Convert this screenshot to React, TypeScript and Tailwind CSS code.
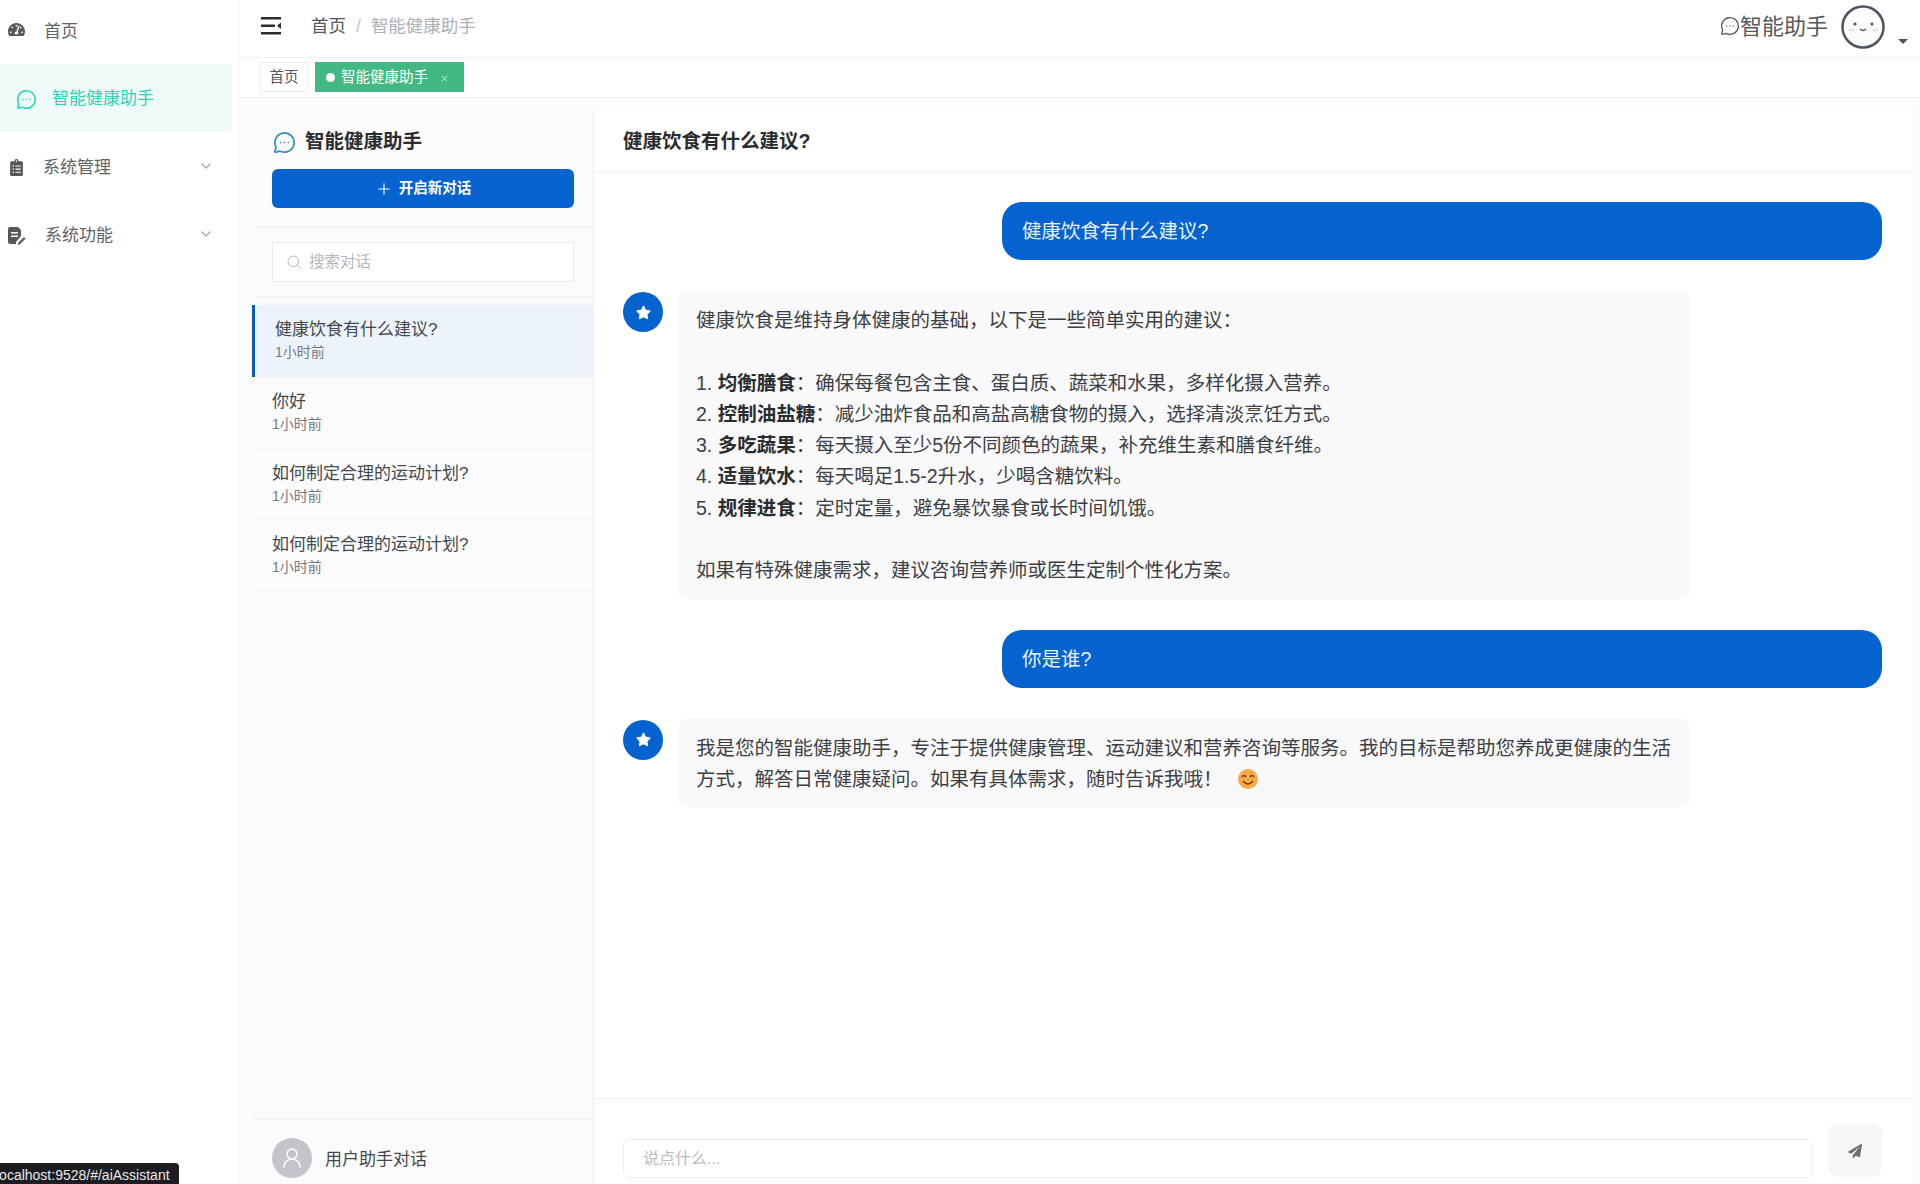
import { ChevronDown, MessageCircleMore, Plus, Search, UserRound, X } from "lucide-react";
import { FaClipboardList, FaPaperPlane, FaStar, FaTachometerAlt } from "react-icons/fa";

const font = { fontFamily: '"Liberation Sans", "Noto Sans CJK SC", sans-serif' };

const chats = [
  { title: "健康饮食有什么建议?", active: true },
  { title: "你好" },
  { title: "如何制定合理的运动计划?" },
  { title: "如何制定合理的运动计划?" },
];

const tips = [
  ["1. ", "均衡膳食", "：确保每餐包含主食、蛋白质、蔬菜和水果，多样化摄入营养。"],
  ["2. ", "控制油盐糖", "：减少油炸食品和高盐高糖食物的摄入，选择清淡烹饪方式。"],
  ["3. ", "多吃蔬果", "：每天摄入至少5份不同颜色的蔬果，补充维生素和膳食纤维。"],
  ["4. ", "适量饮水", "：每天喝足1.5-2升水，少喝含糖饮料。"],
  ["5. ", "规律进食", "：定时定量，避免暴饮暴食或长时间饥饿。"],
];

function DocIcon() {
  return (
    <svg width="18" height="18" viewBox="0 0 18 18" className="text-[#55585c]">
      <path d="M2 0h8l3 3v6l-5 6v2H2a2 2 0 0 1-2-2V2a2 2 0 0 1 2-2z" fill="currentColor" />
      <path d="M3 5h7v1.6H3zM3 8.5h7v1.6H3z" fill="#fff" />
      <path d="M10 16l6-6 1.6 1.6-6 6H10z" fill="currentColor" />
    </svg>
  );
}

function Sidebar() {
  return (
    <aside className="w-[240px] shrink-0 border-r border-[#eef7f5] bg-white text-[17px] text-[#5f6266]">
      <div className="flex h-[60px] items-center pl-[8px] pt-[3px]">
        <FaTachometerAlt className="-mt-[4px] text-[17px] text-[#55585c]" />
        <span className="ml-[19px]">首页</span>
      </div>
      <div className="mt-[4px] flex h-[68px] w-[232px] items-center bg-[#effbf9] pl-[16px] pt-[2px] text-[#2fd3b8]">
        <MessageCircleMore size={21} strokeWidth={1.8} />
        <span className="ml-[15px]">智能健康助手</span>
      </div>
      <div className="flex h-[68px] items-center pl-[8px] pr-[25px] pt-[3px]">
        <FaClipboardList className="text-[17px] text-[#55585c]" />
        <span className="ml-[18px] flex-1">系统管理</span>
        <ChevronDown size={16} className="-mt-[4px] text-[#a5a8ad]" />
      </div>
      <div className="flex h-[68px] items-center pl-[8px] pr-[25px] pt-[3px]">
        <DocIcon />
        <span className="ml-[19px] flex-1">系统功能</span>
        <ChevronDown size={16} className="-mt-[4px] text-[#a5a8ad]" />
      </div>
    </aside>
  );
}

function Topbar() {
  return (
    <header className="flex h-[58px] shrink-0 items-center border-b border-[#f0f1f3] bg-white pl-[21px] pr-[12px]">
      <svg width="20" height="18" viewBox="0 0 20 18" className="-mt-[6px] text-[#2a2d30]">
        <path d="M0 0h20v2.5H0zM0 7.5h14V10H0zM0 15h20v2.5H0z" fill="currentColor" />
        <path d="M20 5.5v6.500l-4-3.200z" fill="currentColor" />
      </svg>
      <div className="-mt-[4px] ml-[30px] flex items-center text-[17.5px]">
        <span className="text-[#55585c]">首页</span>
        <span className="mx-[10px] text-[#c0c4cc]">/</span>
        <span className="text-[#aeb1b6]">智能健康助手</span>
      </div>
      <div className="flex-1" />
      <MessageCircleMore size={20} strokeWidth={1.6} className="-mt-[5px] text-[#55585c]" />
      <span className="-mt-[5px] text-[22px] text-[#55585c]">智能助手</span>
      <svg width="44" height="46" viewBox="0 0 44 46" className="ml-[13px] -mt-[3px]">
        <circle cx="22" cy="23" r="20.5" fill="#fbfcfc" stroke="#4c5560" strokeWidth="2.5" />
        <circle cx="14" cy="20" r="1.6" fill="#4c5560" />
        <circle cx="31" cy="20" r="1.6" fill="#4c5560" />
        <path d="M19 25q3 3 6 0" fill="none" stroke="#4c5560" strokeWidth="1.3" />
        <ellipse cx="11" cy="26" rx="3" ry="1.5" fill="#f3dede" />
        <ellipse cx="34" cy="26" rx="3" ry="1.5" fill="#f3dede" />
      </svg>
      <span className="ml-[13px] mt-[26px] h-0 w-0 border-x-[5px] border-t-[5px] border-x-transparent border-t-[#4c5560]" />
    </header>
  );
}

function Tags() {
  return (
    <div className="flex h-[40px] shrink-0 items-start gap-[7px] border-b border-[#eceef0] bg-white pl-[20px] pt-[4px] text-[14.5px]">
      <span className="flex h-[30px] w-[48px] items-center justify-center border border-[#eeeff1] pt-[1px] text-[#55585c]">首页</span>
      <span className="flex h-[30px] w-[149px] items-center bg-[#42b983] pl-[11px] pt-[1px] text-white">
        <span className="h-[9px] w-[9px] rounded-full bg-white" />
        <span className="ml-[6px]">智能健康助手</span>
        <X size={9} strokeWidth={2.5} className="ml-[12px] mt-[2px] text-[#d6f3e5]" />
      </span>
    </div>
  );
}

function ChatList() {
  return (
    <section className="flex w-[342px] shrink-0 flex-col border-r border-[#eeeff1] bg-[#fbfbfc]">
      <div className="h-[116px] shrink-0 border-b border-[#f0f1f3] px-[20px] pt-[20px]">
        <div className="flex h-[22px] items-center">
          <MessageCircleMore size={23} strokeWidth={1.8} className="ml-[1px] text-[#2a8fc4]" />
          <h2 className="ml-[9px] text-[19.5px] font-bold text-[#2a2d30]">智能健康助手</h2>
        </div>
        <button className="mt-[16px] flex h-[39px] w-[302px] items-center justify-center gap-[6px] rounded-[6px] bg-[#0563d0] text-[14.5px] font-bold text-white">
          <Plus size={18} strokeWidth={1.5} />
          开启新对话
        </button>
      </div>
      <div className="h-[70px] shrink-0 border-b border-[#f0f1f3] px-[20px] pt-[15px]">
        <div className="flex h-[40px] w-[302px] items-center border border-[#e8eaed] bg-white pl-[13px] text-[15.5px] text-[#b4b7bc]">
          <Search size={16} strokeWidth={1.5} />
          <span className="ml-[7px]">搜索对话</span>
        </div>
      </div>
      <ul className="mt-[8px] flex-1">
        {chats.map((chat, i) => (
          <li
            key={i}
            className={
              chat.active
                ? "h-[72px] border-l-[3px] border-[#0a5cb8] bg-[#edf3fc] pl-[20px] pt-[13px]"
                : "h-[71.5px] border-b border-[#f3f4f6] pl-[20px] pt-[13px]"
            }
          >
            <div className="text-[17px] leading-[24px] text-[#45484d]">{chat.title}</div>
            <div className="text-[14px] leading-[21px] text-[#77797e]">1小时前</div>
          </li>
        ))}
      </ul>
      <div className="flex h-[66px] shrink-0 items-start border-t border-[#eeeff1] pl-[20px] pt-[19px]">
        <span className="flex h-[40px] w-[40px] items-center justify-center rounded-full bg-[#c3c4cb] text-white">
          <UserRound size={24} strokeWidth={1.5} />
        </span>
        <span className="ml-[13px] mt-[9px] text-[17px] text-[#45484d]">用户助手对话</span>
      </div>
    </section>
  );
}

function AiAvatar() {
  return (
    <span className="mt-[2px] flex h-[40px] w-[40px] shrink-0 items-center justify-center rounded-full bg-[#0563d0] text-white">
      <FaStar size={15} />
    </span>
  );
}

function UserBubble({ text }: { text: string }) {
  return (
    <div className="ml-auto flex h-[58px] w-[880px] items-center rounded-[20px] bg-[#0563d0] pl-[20px] pt-[1px] text-[19.5px] text-[#e8f2ff]">
      {text}
    </div>
  );
}

function Smile() {
  return (
    <svg width="22" height="22" viewBox="0 0 22 22" className="ml-[14px] inline-block align-[-4px]">
      <circle cx="11" cy="11" r="10" fill="#f5a94a" />
      <path d="M5 9q2-3 4 0M13 9q2-3 4 0" fill="none" stroke="#7a3d10" strokeWidth="1.4" />
      <path d="M6 13q5 6 10 0" fill="none" stroke="#7a3d10" strokeWidth="1.4" />
    </svg>
  );
}

function Conversation() {
  return (
    <section className="flex min-w-0 flex-1 flex-col bg-white">
      <div className="flex h-[61px] shrink-0 items-center border-b border-[#f0f1f3] pl-[29px] pt-[1px] text-[19.5px] font-bold text-[#2a2d30]">
        健康饮食有什么建议?
      </div>
      <div className="flex flex-1 flex-col gap-[30px] pl-[29px] pr-[30px] pt-[30px] text-[19.5px] leading-[31.3px] text-[#3c3f44]">
        <UserBubble text="健康饮食有什么建议?" />
        <div className="flex gap-[14px]">
          <AiAvatar />
          <div className="w-[1014px] rounded-[14px] bg-[#f9f9fb] px-[19px] pb-[13px] pt-[15px]">
            <p>健康饮食是维持身体健康的基础，以下是一些简单实用的建议：</p>
            <ol className="my-[31.3px]">
              {tips.map((t) => (
                <li key={t[1]}>
                  {t[0]}
                  <strong className="font-bold text-[#2a2d30]">{t[1]}</strong>
                  {t[2]}
                </li>
              ))}
            </ol>
            <p>如果有特殊健康需求，建议咨询营养师或医生定制个性化方案。</p>
          </div>
        </div>
        <UserBubble text="你是谁?" />
        <div className="flex gap-[14px]">
          <AiAvatar />
          <div className="w-[1014px] rounded-[14px] bg-[#f9f9fb] px-[19px] pb-[13px] pt-[15px]">
            我是您的智能健康助手，专注于提供健康管理、运动建议和营养咨询等服务。我的目标是帮助您养成更健康的生活方式，解答日常健康疑问。如果有具体需求，随时告诉我哦！
            <Smile />
          </div>
        </div>
      </div>
      <div className="flex h-[86px] shrink-0 items-start gap-[15px] border-t border-[#f0f1f3] pl-[29px] pr-[30px] pt-[25px]">
        <div className="mt-[15px] flex h-[39px] flex-1 items-center rounded-[6px] border border-[#eeeff1] pl-[19px] text-[16px] text-[#b9bcc1]">
          说点什么...
        </div>
        <button className="flex h-[53px] w-[54px] items-center justify-center rounded-[10px] bg-[#f5f6f7] text-[#6b6e73]">
          <FaPaperPlane size={14} />
        </button>
      </div>
    </section>
  );
}

export default function App() {
  return (
    <div style={font} className="relative flex h-[1184px] w-full overflow-hidden bg-white">
      <Sidebar />
      <main className="flex min-w-0 flex-1 flex-col">
        <Topbar />
        <Tags />
        <div className="flex min-h-0 flex-1 bg-[#fbfcfc] pl-[12px] pr-[8px] pt-[13px]">
          <ChatList />
          <Conversation />
        </div>
      </main>
      <div className="absolute bottom-0 left-0 flex h-[21px] w-[179px] items-center overflow-hidden whitespace-nowrap rounded-tr-[4px] bg-[#1c1d20] pt-[3px] text-[14px] text-[#e8e8e8]">
        <span className="-ml-[4px]">localhost:9528/#/aiAssistant</span>
      </div>
    </div>
  );
}
